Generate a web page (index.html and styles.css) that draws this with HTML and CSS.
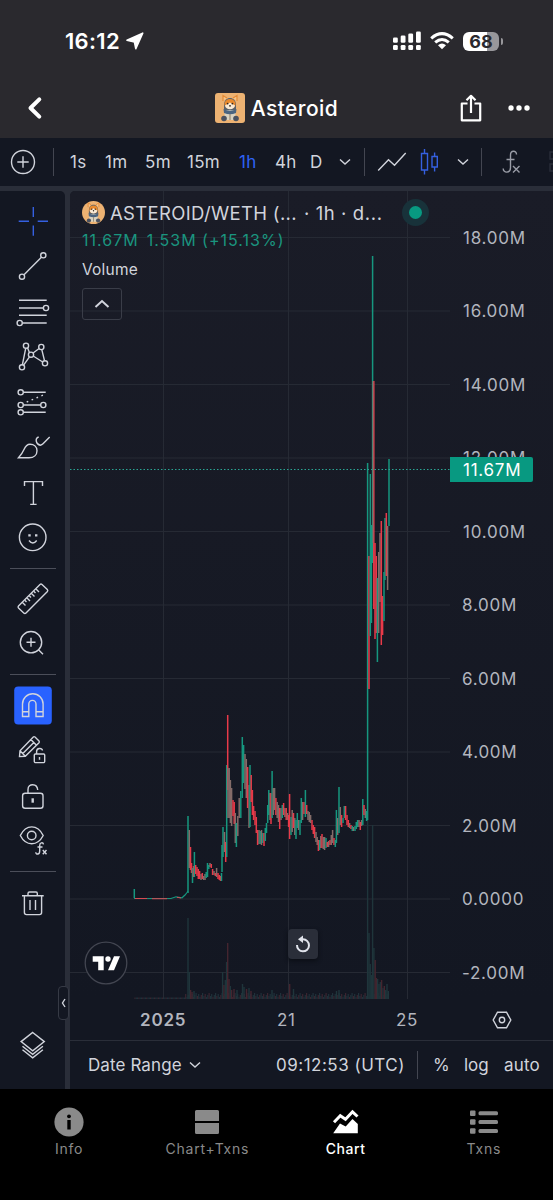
FILE: index.html
```html
<!DOCTYPE html>
<html lang="en">
<head>
  <meta charset="utf-8">
  <title>Asteroid</title>
  <link rel="stylesheet" href="styles.css">
</head>
<body>
  <svg class="defs" width="0" height="0">
    <symbol id="dog" viewBox="0 0 30 30">
      <rect width="30" height="30" fill="#edb272"/>
      <path d="M8 8L8 2.500L12 5M22 8L22 2.500L18 5" fill="#f6c58a" stroke="#e58a35" stroke-width="1.200"/>
      <path d="M9 12C9 2.500 21 2.500 21 12V17H9z" fill="#59616b"/>
      <ellipse cx="15" cy="11" rx="5.500" ry="5" fill="#e98a2d"/>
      <path d="M10 12.500Q12.500 11 15 9.500Q17.500 11 20 12.500Q19 16.300 15 16.300T10 12.500" fill="#f8ead6"/>
      <circle cx="12.600" cy="10.600" r=".9" fill="#33251d"/><circle cx="17.400" cy="10.600" r=".9" fill="#33251d"/><circle cx="15" cy="12.800" r=".9" fill="#33251d"/>
      <path d="M10 17H20L21 27H9z" fill="#d9d2c0"/>
      <path d="M8.500 16Q15 19.500 21.500 16L21 20Q15 22.500 9 20z" fill="#4c6580"/>
      <circle cx="9" cy="25.500" r="2.800" fill="#4b5260"/><circle cx="21" cy="25.500" r="2.800" fill="#4b5260"/>
      <path d="M15 21V27" stroke="#8a7d68"/>
    </symbol>
  </svg>

  <header class="header">
    <div class="status">
      <div class="clock">16:12
        <svg width="18" height="18" viewBox="0 0 18 18"><path d="M16.700 1.200L9.800 16.700L8.400 9.900L1 8.200z" fill="#fff" stroke="#fff" stroke-width="1.600" stroke-linejoin="round"/></svg>
      </div>
      <div class="signals">
        <svg width="28" height="20" viewBox="0 0 28 20" fill="#fff"><rect y="6.500" width="4.800" height="5.300" rx="1.300"/><rect x="7.700" y="4.500" width="4.800" height="7.300" rx="1.300"/><rect x="15.300" y="2.500" width="4.800" height="9.300" rx="1.300"/><rect x="23" y=".5" width="4.800" height="11.300" rx="1.300"/><rect y="14" width="4.800" height="5" rx="1.300"/><rect x="7.700" y="14" width="4.800" height="5" rx="1.300"/><rect x="15.300" y="14" width="4.800" height="5" rx="1.300"/><rect x="23" y="14" width="4.800" height="5" rx="1.300"/></svg>
        <svg width="24" height="18" viewBox="0 0 24 18" fill="none" stroke="#fff" stroke-width="3"><path d="M1.200 6.300Q12-3 22.800 6.300M5.200 10.400Q12 4.500 18.800 10.400"/><path d="M8 13.200Q12 10 16 13.200L12 17.300z" fill="#fff" stroke="none"/></svg>
        <div class="battery"><span>68</span></div>
      </div>
    </div>
    <div class="nav">
      <svg width="16" height="24" viewBox="0 0 16 24"><path d="M12.300 3.300L3.500 12L12.300 20.700" fill="none" stroke="#fff" stroke-width="4" stroke-linecap="round" stroke-linejoin="round"/></svg>
      <div class="name"><svg class="logo" width="30" height="30"><use href="#dog"/></svg>Asteroid</div>
      <div class="actions">
        <svg width="22" height="28" viewBox="0 0 22 28" fill="none" stroke="#fff" stroke-width="2.200"><path d="M7.500 9.500H1.800V26.300H20.200V9.500H14.500M11 19V2.500M6.500 6.300L11 1.800L15.500 6.300" stroke-linejoin="round"/></svg>
        <svg width="22" height="6" viewBox="0 0 22 6" fill="#fff"><circle cx="3" cy="3" r="2.700"/><circle cx="11" cy="3" r="2.700"/><circle cx="19" cy="3" r="2.700"/></svg>
      </div>
    </div>
  </header>

  <div class="toolbar">
    <svg class="add" width="26" height="26" viewBox="0 0 26 26"><circle cx="13" cy="13" r="11.500"/><path d="M7.300 13H18.700M13 7.300V18.700"/></svg>
    <i class="bar"></i>
    <span class="t1">1s</span><span class="t2">1m</span><span class="t3">5m</span><span class="t4">15m</span><span class="t5 on">1h</span><span class="t6">4h</span><span class="t7">D</span>
    <svg class="chev" width="12" height="8" viewBox="0 0 12 8"><path d="M1 1.500L6 6L11 1.500"/></svg>
    <i class="bar b2"></i>
    <svg class="line" width="30" height="20" viewBox="0 0 30 20"><path d="M1.200 18.500L11.500 7.800L17.500 13.200L28.700 1"/></svg>
    <svg class="candle on" width="20" height="26" viewBox="0 0 20 26"><path d="M2.500 4.500H8.500V21H2.500zM5.500 0V4.500M5.500 21V25.500M13 7.500H18.300V18H13zM15.600 3.500V7.500M15.600 18V22.500"/></svg>
    <svg class="chev c2" width="12" height="8" viewBox="0 0 12 8"><path d="M1 1.500L6 6L11 1.500"/></svg>
    <i class="bar b3"></i>
    <svg class="fx" width="20" height="24" viewBox="0 0 20 24"><path d="M14.500 4.500C14.500 0 8.500 .3 8.500 5V17.500C8.500 23.500 1.200 23.500 1.200 18.500M4.500 9.500H12.500M11 16L17.500 22.500M17.500 16L11 22.500"/></svg>
    <svg class="fade" width="7" height="22" viewBox="0 0 7 22"><path d="M8 1H2V8H8M8 13H2V20H8"/></svg>
  </div>

  <div class="main">
    <div class="tools">
      <svg class="on" viewBox="0 0 44 44"><path d="M7.700 22.300H18M26.700 22.300H37M22.300 8V18M22.300 26.500V36.700"/></svg>
      <svg viewBox="0 0 44 44"><path d="M13 30.800L30.400 13.300"/><circle cx="11" cy="32.700" r="2.600"/><circle cx="32.300" cy="11.300" r="2.600"/></svg>
      <svg viewBox="0 0 44 44"><path d="M8 10.300H35.700M8 18H32.300M8 25.300H35.700M11.500 33H35.700"/><circle cx="35" cy="18" r="2.600"/><circle cx="8.700" cy="33" r="2.600"/></svg>
      <svg viewBox="0 0 44 44"><path d="M14.700 13.300L11.400 29.700M16.500 12.800L18.400 17.500M22.100 18L28.100 13.500M30.800 14.600L33.500 25.700M12.600 30.200L18.500 21.800M22.200 21L31.700 27"/><circle cx="15" cy="10.700" r="2.600"/><circle cx="30.300" cy="12" r="2.600"/><circle cx="20" cy="19.700" r="2.600"/><circle cx="11" cy="32.300" r="2.600"/><circle cx="34" cy="28.300" r="2.600"/></svg>
      <svg viewBox="0 0 44 44"><path d="M12.300 12.300H34.700M12.300 25H29.700M12.300 32.300H34.700"/><path d="M15.700 22L32 15.200" stroke-dasharray="1.700 3.600"/><circle cx="9.700" cy="12.300" r="2.600"/><circle cx="9.700" cy="25" r="2.600"/><circle cx="32.300" cy="25" r="2.600"/><circle cx="9.700" cy="32.300" r="2.600"/></svg>
      <svg viewBox="0 0 44 44"><path d="M7.500 32.700H18C23 32.700 26 29.700 26 25.700S23 19.300 19 19.300C16 19.300 14.500 21 13 24.500C11.500 28 9.500 30.500 7.500 32.700zM27.700 12C23.500 13.500 25 19.500 29.300 20.300C30.500 20 31.300 19.500 32 18.800L38.700 12"/></svg>
      <svg viewBox="0 0 44 44"><path d="M13.500 15V10.600H31.500V15M22.400 10.600V33.400M19.200 33.400H25.600"/></svg>
      <svg viewBox="0 0 44 44"><circle cx="21.700" cy="21.300" r="13.300"/><path d="M18 24.500Q21.800 29.500 25.700 24.500"/><path d="M17.300 19.400H19.700M24 19.400H26.400" stroke-width="2.300"/></svg>
      <hr>
      <svg viewBox="0 0 44 44"><path d="M29 7.500L7.500 29Q6.600 30 7.500 31L13 36.300Q14 37 15 36L36.400 14.500Q37.200 13.500 36.300 12.500L31 7.500Q30 6.600 29 7.500zM11.500 25.500L14.500 28.500M16 21L19 24M20.500 16.500L23.500 19.500M25 12L28 15"/><path d="M13.800 23.200L15.500 24.900M18.300 18.700L20 20.400M22.800 14.200L24.500 15.900"/></svg>
      <svg viewBox="0 0 44 44"><circle cx="20" cy="20.200" r="10.700"/><path d="M27.500 27.700L32 32.200M15.500 20.200H24.500M20 15.700V24.700"/></svg>
      <hr>
      <svg class="magnet" viewBox="0 0 44 44"><rect x="3.200" y="2.500" width="37.600" height="38" rx="4"/><path d="M11.500 32.500V20A10.300 10.300 0 0 1 32.100 20V32.500H25V20A3.600 3.600 0 0 0 17.800 20V32.500zM11.500 27.700H17.800M25 27.700H32.100"/></svg>
      <svg viewBox="0 0 44 44"><path d="M8.500 27.600L9 21.700L22.300 8Q23 7.300 24 8L28 12Q28.700 13 28 13.800L14.300 27.300zM9 21.700L14.300 27.300M19.800 10.500L25.500 16.300M11.800 24.500L22.800 13.500"/><rect x="23.300" y="25" width="10.400" height="8.600" rx="1"/><path d="M25.600 25V22.500C25.600 18.500 31 18.700 31.500 21.500M28.500 28V30.700"/></svg>
      <svg viewBox="0 0 44 44"><rect x="11.600" y="19.300" width="20.400" height="15" rx="2.500"/><path d="M17 19.300V15.500C17 9 26.300 9 26.700 16"/><path d="M21.700 24.300V28.700" stroke-width="2.400"/></svg>
      <svg viewBox="0 0 44 44"><path d="M9.300 16.500C15 5 26.500 5 32.200 16.500C26.500 27.500 15 27.500 9.300 16.500z"/><circle cx="20.700" cy="16.500" r="4.300"/><path d="M32.500 25.300C32 23 28.700 23.300 28.700 26.500V32C28.700 36 24.700 35.700 24.800 33.300M26.500 28H31.500M31.800 31L35.500 35.200M35.500 31L31.800 35.200"/></svg>
      <hr>
      <svg viewBox="0 0 44 44"><path d="M11 14.700H32.700M17 14.700V12.500Q17 11 18.500 11H25Q26.300 11 26.300 12.500V14.700M13.400 14.700V31.500Q13.400 33.600 15.500 33.600H28.500Q30.600 33.600 30.600 31.500V14.700M19 19V29M24.500 19V29"/></svg>
      <svg class="layers" viewBox="0 0 44 44"><path d="M21.700 9.500L33.300 18.600L21.700 27.800L10.100 18.600zM11.500 23.200L21.700 31.300L31.900 23.200M11.500 26.700L21.700 34.800L31.900 26.700"/></svg>
      <div class="handle"><svg width="5" height="10" viewBox="0 0 5 10"><path d="M4 1L1.500 5L4 9"/></svg></div>
    </div>

    <div class="panel">
      <div class="chart">
        <svg class="plot" width="483" height="809" viewBox="70 191 483 809">
          <path class="grid" d="M163.500 191V999M288.500 191V999M407.500 191V999M70 237.500H450M70 311H450M70 384.500H450M70 458H450M70 531.500H450M70 605H450M70 678.500H450M70 752H450M70 825.500H450M70 899H450M70 972.500H450"/>
          <g id="volume"></g>
          <g id="candles"></g>
          <path class="price-line" d="M70 469.500H450"/>
          <g class="scale">
            <text x="463" y="243.700">18.00M</text>
            <text x="463" y="317.200">16.00M</text>
            <text x="463" y="390.700">14.00M</text>
            <text x="463" y="464.200">12.00M</text>
            <text x="463" y="537.700">10.00M</text>
            <text x="462" y="611.200">8.00M</text>
            <text x="462" y="684.700">6.00M</text>
            <text x="462" y="758.200">4.00M</text>
            <text x="462" y="831.700">2.00M</text>
            <text x="462" y="905.200">0.0000</text>
            <text x="462" y="978.700">-2.00M</text>
          </g>
          <path d="M450 457H531Q533 457 533 459V480Q533 482 531 482H450z" fill="#089981"/>
          <text class="price" x="463" y="476">11.67M</text>
        </svg>
        <div class="legend">
          <div class="pair"><svg class="coin" width="23" height="23"><use href="#dog"/></svg><span class="p1">ASTEROID/WETH (...</span><span class="p2">· 1h · d...</span><i class="live"></i></div>
          <div class="change"><span>11.67M</span><span>1.53M (+15.13%)</span></div>
          <div class="volume">Volume</div>
          <div class="collapse"><svg width="16" height="10" viewBox="0 0 16 10"><path d="M1.500 8L8 2L14.500 8"/></svg></div>
        </div>
        <svg class="tv" width="44" height="44" viewBox="0 0 44 44"><circle cx="22" cy="22" r="20.800" fill="#131722" stroke="#434651" stroke-width="1.300"/><path d="M8.700 15.300H19.700V29.300H14.200V20.800H8.700zM30 15.300H36L30 29.300H24z" fill="#fff"/><circle cx="24" cy="18" r="2.700" fill="#fff"/></svg>
        <div class="reset"><svg width="16" height="18" viewBox="0 0 16 18"><path d="M2 10A6 6 0 1 0 8 4.300H5.500" fill="none" stroke="#e0e3eb" stroke-width="2"/><path d="M3 4.300L8 .5V8z" fill="#e0e3eb"/></svg></div>
      </div>
      <div class="times">
        <b>2025</b><span class="d21">21</span><span class="d25">25</span>
        <svg width="20" height="18" viewBox="0 0 20 18"><path d="M5.500 1.200H14.500L18.800 9L14.500 16.800H5.500L1.200 9z"/><circle cx="10" cy="9" r="2.700"/></svg>
      </div>
      <div class="bottom">
        <span class="range">Date Range</span>
        <svg width="12" height="8" viewBox="0 0 12 8"><path d="M1 1.500L6 6L11 1.500"/></svg>
        <span class="utc">09:12:53 (UTC)</span>
        <i class="bar"></i>
        <span class="pct">%</span><span class="log">log</span><span class="auto">auto</span>
      </div>
    </div>
  </div>

  <div class="tabs">
    <div class="tab"><svg width="30" height="30" viewBox="0 0 30 30"><circle cx="15" cy="15" r="14.600" fill="#8a8a8a"/><circle cx="15" cy="9.300" r="1.900"/><path d="M13.300 13H16.700V22.500H13.300z"/></svg>Info</div>
    <div class="tab"><svg width="30" height="30" viewBox="0 0 30 30" fill="#8a8a8a"><path d="M4.500 3H25.500Q27 3 27 4.500V14H3V4.500Q3 3 4.500 3zM3 16H27V25.500Q27 27 25.500 27H4.500Q3 27 3 25.500z"/></svg>Chart+Txns</div>
    <div class="tab active"><svg width="30" height="30" viewBox="0 0 30 30"><path d="M3 15.200L9.300 8.800L14.500 12.300L21.500 4.800L26.500 9.500" fill="none" stroke="#fff" stroke-width="3"/><path d="M2.200 26.200L9 16.500L14.700 19.500L21.500 12L26.800 17V26.200z" fill="#fff"/></svg>Chart</div>
    <div class="tab"><svg width="30" height="30" viewBox="0 0 30 30" fill="#8a8a8a"><rect x="1" y="3.500" width="5.500" height="5.500" rx="1"/><rect x="1" y="12.300" width="5.500" height="5.500" rx="1"/><rect x="1" y="21.200" width="5.500" height="5.500" rx="1"/><rect x="9.500" y="4.300" width="19.500" height="4" rx="1.500"/><rect x="9.500" y="13.100" width="19.500" height="4" rx="1.500"/><rect x="9.500" y="22" width="19.500" height="4" rx="1.500"/></svg>Txns</div>
  </div>
  <script src="script.js"></script>
</body>
</html>
```
FILE: styles.css
```css
body {
  margin: 0;
  width: 553px;
  height: 1200px;
  overflow: hidden;
  background: #000;
  color: #d1d4dc;
  font-family: Inter, "Liberation Sans", sans-serif;
  font-size: 17px;
}

svg {
  display: block;
  flex: none;
}

.defs {
  position: absolute;
}

/* header */
.header {
  height: 138px;
  background: #2a292e;
  color: #fff;
}

.status {
  display: flex;
  justify-content: space-between;
  align-items: center;
  height: 82px;
  padding: 0 50px 0 65px;
}

.clock {
  display: flex;
  align-items: center;
  gap: 6px;
  font-size: 22px;
  font-weight: 600;
  letter-spacing: 0.3px;
}

.signals {
  display: flex;
  align-items: center;
  gap: 9px;
}

.battery {
  position: relative;
  width: 36px;
  height: 19px;
  margin-right: 4px;
  border-radius: 6px;
  background: linear-gradient(90deg, #fff 68%, #98979b 68%);
  color: #2a292e;
  font-size: 18px;
  font-weight: 700;
  line-height: 19px;
  text-align: center;
}

.battery::after {
  content: "";
  position: absolute;
  right: -4px;
  top: 6px;
  width: 2px;
  height: 7px;
  border-radius: 0 2px 2px 0;
  background: #98979b;
}

.nav {
  display: flex;
  justify-content: space-between;
  align-items: center;
  height: 52px;
  padding: 0 23px 0 27px;
}

.name {
  display: flex;
  align-items: center;
  gap: 6px;
  margin-left: 50px;
  font-size: 21px;
  font-weight: 500;
  letter-spacing: 0.4px;
}

.logo {
  border-radius: 3px;
}

.actions {
  display: flex;
  align-items: center;
  gap: 26px;
}

/* top toolbar */
.toolbar {
  display: flex;
  align-items: center;
  height: 48px;
  padding-left: 10px;
  background: #131722;
  letter-spacing: 0.3px;
  white-space: nowrap;
}

.toolbar span {
  flex: none;
}

.toolbar svg,
.tools svg,
.times svg,
.bottom svg,
.collapse svg {
  fill: none;
  stroke: #d1d4dc;
  stroke-width: 1.400;
}

.toolbar .on,
.tools .on {
  color: #2e62f5;
  stroke: #3560e0;
}

.bar {
  flex: none;
  width: 1px;
  height: 28px;
  background: #434651;
}

.toolbar .bar { margin-left: 17px; }
.t1 { width: 35px; margin-left: 16px; }
.t2 { width: 40px; }
.t3 { width: 42px; }
.t4 { width: 52px; }
.t5 { width: 36px; }
.t6 { width: 35px; }
.t7 { width: 29px; }
.toolbar .b2 { margin-left: 13px; }
.line { margin-left: 12px; }
.candle { margin-left: 12px; }
.c2 { margin-left: 18px; }
.toolbar .b3 { margin-left: 12px; }
.toolbar .fx { margin-left: 20px; stroke: #999ca6; }
.toolbar .fade { margin-left: 26px; stroke: #2a2e39; }

/* chart area */
.main {
  display: flex;
  gap: 5px;
  height: 898px;
  padding-top: 5px;
  background: #2a2e39;
}

.tools {
  position: relative;
  display: flex;
  flex-direction: column;
  align-items: center;
  width: 65px;
  height: 890.500px;
  padding-top: 7.500px;
  border-radius: 0 5px 0 0;
  background: #131722;
}

.tools > svg {
  width: 44px;
  height: 44px;
  margin: 0.625px 0;
}

.tools hr {
  width: 46px;
  height: 1px;
  margin: 7px 0 8px;
  border: 0;
  background: #4b4e59;
}

.tools .magnet rect {
  fill: #2962ff;
  stroke: none;
}

.tools .layers {
  margin-top: auto;
  margin-bottom: 22px;
}

.handle {
  position: absolute;
  right: -4px;
  top: 795px;
  display: flex;
  align-items: center;
  justify-content: center;
  width: 9px;
  height: 32px;
  border: 1px solid #363a45;
  border-radius: 4px;
  background: #131722;
}

.panel {
  flex: 1;
  background: #131722;
  border-radius: 5px 0 0 0;
}

.chart {
  position: relative;
  height: 808px;
  border-bottom: 1px solid #2a2e39;
}

.plot {
  background: linear-gradient(#1a1c27, #131722);
  border-radius: 5px 0 0 0;
}

.grid {
  fill: none;
  stroke: #262a34;
}

.price-line {
  stroke: #2aa594;
  stroke-dasharray: 1.500 2;
}

.scale,
.price {
  fill: #b2b5be;
  font-size: 17px;
  letter-spacing: 0.75px;
}

.price {
  fill: #fff;
}

.legend {
  position: absolute;
  left: 12px;
  top: 8px;
  white-space: nowrap;
}

.pair {
  display: flex;
  align-items: center;
  height: 27px;
  font-size: 18.500px;
}

.coin {
  margin-right: 5px;
  border-radius: 50%;
}

.p1 {
  letter-spacing: 0.33px;
}

.p2 {
  margin-left: 7px;
  letter-spacing: 0.6px;
}

.live {
  width: 13px;
  height: 13px;
  margin-left: 19px;
  border: 7px solid #18323a;
  border-radius: 50%;
  background: #089981;
}

.change {
  display: flex;
  gap: 8px;
  margin-top: 4px;
  color: #1a957f;
  font-size: 16px;
  line-height: 21px;
  letter-spacing: 1px;
}

.volume {
  margin-top: 8px;
  font-size: 15.500px;
  line-height: 21px;
  letter-spacing: 0.2px;
}

.collapse {
  display: flex;
  align-items: center;
  justify-content: center;
  width: 38px;
  height: 30px;
  margin-top: 8px;
  border: 1px solid #3a3d48;
  border-radius: 3px;
}

.collapse svg {
  stroke-width: 2;
}

.tv {
  position: absolute;
  left: 14px;
  top: 750px;
}

.reset {
  position: absolute;
  left: 218px;
  top: 738px;
  display: flex;
  align-items: center;
  justify-content: center;
  width: 30px;
  height: 30px;
  border-radius: 4px;
  background: #2a2e39;
  box-shadow: 0 2px 4px #0b0e15;
}

.times {
  display: flex;
  align-items: center;
  height: 40px;
  padding-left: 70px;
  border-bottom: 1px solid #2a2e39;
  color: #b2b5be;
}

.times b {
  width: 137px;
  font-weight: 600;
  letter-spacing: 0.8px;
}

.d21,
.d25 {
  letter-spacing: 0.6px;
}

.d21 { width: 119px; }
.d25 { width: 96px; }

.bottom {
  display: flex;
  align-items: center;
  height: 48px;
  padding-left: 18px;
  white-space: nowrap;
}

.range {
  width: 101px;
  letter-spacing: 0.1px;
}

.utc {
  width: 129px;
  margin-left: 75px;
  letter-spacing: 0.5px;
}

.bottom .bar { margin-left: 12px; }
.pct { width: 31px; margin-left: 15px; }
.log { width: 40px; }
.auto { letter-spacing: 0.2px; }

/* tab bar */
.tabs {
  display: flex;
  height: 111px;
}

.tab {
  display: flex;
  flex: 1;
  flex-direction: column;
  align-items: center;
  gap: 3px;
  padding-top: 18px;
  color: #8a8a8a;
  font-size: 14px;
  letter-spacing: 0.8px;
}

.active {
  color: #fff;
  font-weight: 500;
  letter-spacing: 0.5px;
}
```
FILE: script.js
```js
const colors = { g: "#16977f", r: "#e83a49", m: "#846c69" };

// x, high, low, color
const candles = [
  [134.3, 889, 898, "g"], [188, 816, 893, "g"], [189.3, 830, 868, "m"], [190.5, 847, 870, "r"], [191.5, 863, 873, "r"],
  [192.5, 868, 883, "g"], [193.5, 866, 877, "r"], [194.4, 852, 877, "g"], [195.7, 865, 874, "r"], [197, 867, 876, "r"],
  [198.3, 869, 879, "r"], [199.6, 871, 879, "r"], [201, 874, 880, "m"], [202.3, 873, 879, "r"], [203.6, 876, 880, "m"],
  [205, 874, 880, "m"], [206.2, 872, 878, "g"], [207.5, 863, 877, "g"], [208.8, 865, 869, "g"], [210, 863, 867, "m"],
  [211.3, 864, 868, "r"], [212.6, 869, 875, "r"], [214, 871, 875, "m"], [215.3, 873, 876, "r"], [216.6, 868, 877, "m"],
  [218, 873, 879, "r"], [219.3, 875, 880, "r"], [220.5, 876, 881, "r"], [221.5, 873, 881, "g"], [222, 845, 872, "g"],
  [223, 827, 857, "g"], [224.5, 832, 852, "m"], [225.7, 842, 862, "r"], [226.7, 765, 857, "g"], [227.7, 715, 790, "r"],
  [228, 768, 818, "m"], [229.2, 768, 818, "m"], [230.4, 780, 823, "m"], [231.6, 788, 826, "m"], [233, 800, 816, "r"],
  [234.2, 802, 824, "r"], [235.3, 813, 843, "m"], [236.4, 823, 847, "g"], [237.8, 816, 836, "m"], [239.2, 798, 818, "m"],
  [240.8, 791, 818, "g"], [242.3, 737, 798, "g"], [243.6, 745, 783, "g"], [245, 754, 789, "m"], [246.3, 759, 798, "m"],
  [247.6, 767, 808, "r"], [249, 785, 828, "m"], [250, 765, 827, "g"], [251.2, 775, 802, "r"], [252.4, 790, 815, "r"],
  [253.6, 806, 820, "r"], [255, 811, 825, "r"], [256.3, 817, 833, "r"], [257.6, 830, 845, "r"], [259, 830, 844, "m"],
  [260.2, 831, 844, "g"], [261.5, 830, 845, "m"], [262.8, 833, 843, "g"], [264, 833, 846, "r"], [265.3, 828, 841, "g"],
  [266.5, 823, 833, "g"], [267.7, 805, 823, "g"], [268.8, 790, 815, "g"], [270, 793, 820, "m"], [271, 793, 824, "r"],
  [272.1, 771, 818, "g"], [273.3, 788, 815, "m"], [274.6, 788, 810, "m"], [275.9, 798, 815, "r"], [277.2, 802, 818, "m"],
  [278.5, 805, 822, "m"], [279.7, 808, 829, "r"], [281, 808, 820, "m"], [282.3, 805, 818, "g"], [283.6, 803, 815, "r"],
  [284.9, 808, 817, "m"], [286.2, 808, 820, "r"], [287.5, 813, 820, "m"], [288.6, 815, 827, "r"], [289.6, 794, 839, "r"],
  [291, 817, 835, "g"], [292.2, 810, 832, "m"], [293.5, 813, 828, "r"], [294.8, 818, 835, "m"], [296, 820, 839, "g"],
  [297.3, 813, 828, "g"], [298.6, 820, 830, "m"], [300, 820, 835, "g"], [301.3, 798, 823, "g"], [302.6, 802, 820, "m"],
  [304, 802, 814, "r"], [305.4, 790, 817, "g"], [306.7, 805, 814, "r"], [308, 811, 820, "m"], [309.3, 812, 822, "m"],
  [310.6, 815, 823, "m"], [312, 820, 830, "r"], [313.3, 825, 834, "r"], [314.6, 827, 838, "r"], [316, 832, 842, "m"],
  [317.2, 837, 845, "m"], [318.4, 840, 851, "r"], [319.6, 840, 850, "g"], [320.8, 836, 848, "m"], [322, 834, 848, "r"],
  [323.3, 837, 849, "m"], [324.6, 837, 850, "m"], [326, 838, 848, "g"], [327.3, 842, 847, "r"], [328.6, 841, 847, "m"],
  [330, 840, 845, "r"], [331.3, 835, 845, "m"], [332.6, 830, 843, "m"], [334, 838, 845, "r"], [335.3, 840, 847, "g"],
  [336.4, 810, 843, "g"], [337.7, 818, 835, "m"], [339, 787, 833, "g"], [340.3, 807, 825, "m"], [341.6, 815, 827, "r"],
  [343, 818, 823, "g"], [344.3, 806, 818, "g"], [345.6, 806, 820, "r"], [347, 815, 825, "r"], [348.3, 820, 827, "r"],
  [349.6, 823, 828, "m"], [351, 825, 829, "r"], [352.3, 826, 831, "g"], [353.6, 827, 831, "m"], [355, 826, 831, "g"],
  [356.3, 822, 829, "g"], [357.6, 820, 827, "g"], [359, 820, 827, "m"], [360.3, 822, 830, "r"], [361.6, 820, 826, "m"],
  [362.8, 799, 825, "g"], [364, 805, 815, "r"], [365.3, 809, 818, "m"], [366.6, 811, 821, "g"],
  [367.6, 463, 820, "g"], [369, 556, 689, "r"], [370.3, 474, 636, "g"], [371.4, 525, 623, "g"], [372.6, 256, 563, "g"],
  [373.8, 381, 609, "r"], [375, 543, 639, "r"], [376.3, 556, 633, "r"], [377.4, 578, 662, "g"], [378.7, 552, 633, "m"],
  [380, 533, 602, "m"], [381.3, 521, 645, "r"], [382.6, 596, 635, "r"], [384, 572, 621, "g"], [385, 518, 580, "g"],
  [386.3, 513, 576, "r"], [387.6, 526, 590, "m"], [389, 459, 526, "g"]
];

// x, top, color
const peaks = [
  [188, 918, "g"], [189.3, 972, "g"], [190.6, 990, "r"], [192, 992, "r"], [194, 991, "g"], [222.6, 972, "g"],
  [224, 985, "r"], [225.3, 980, "g"], [226.6, 962, "g"], [227.7, 943, "r"], [229, 979, "r"], [230.3, 986, "g"],
  [231.6, 990, "r"], [234, 989, "r"], [237, 990, "g"], [242.5, 984, "g"], [244, 987, "g"], [246.5, 989, "r"],
  [249, 988, "g"], [251, 991, "r"], [272, 990, "g"], [289.7, 984, "r"], [293.5, 989, "g"], [336.5, 991, "g"],
  [339, 990, "g"], [367.6, 820, "g"], [369, 933, "g"], [370.2, 964, "g"], [371.4, 975, "g"], [372.6, 825, "g"],
  [373.9, 948, "g"], [375.2, 960, "r"], [376.4, 978, "r"], [377.6, 979, "g"], [379, 984, "g"], [380.3, 982, "g"],
  [381.6, 980, "r"], [383, 988, "g"], [384.3, 986, "r"], [385.6, 990, "g"], [387, 984, "g"], [388.3, 991, "g"]
];

function bar(x, top, bottom, color, width) {
  return `<rect x="${x - width / 2}" y="${top}" width="${width}" height="${bottom - top}" fill="${color}"/>`;
}

let vol = "";
for (let i = 0; i < 195; i++) {
  const x = 135 + i * 1.3;
  const h = x < 185 ? 1.5 : 2 + (i * 7 % 5);
  vol += bar(x, 999 - h, 999, i % 3 ? "#20313a" : "#3b2530", 1.2);
}
peaks.forEach(p => vol += bar(p[0], p[1], 999, p[2] === "g" ? "#1f353b" : "#44252f", 1.4));
document.getElementById("volume").innerHTML = vol;

let out = '<path d="M134 898.500H171L176 896.800L182 897.800L185 895L187 892.500L188 891" fill="none" stroke="#16977f" stroke-width="1.200"/>';
out += '<path d="M135 898.500H147M152 898.700H167M177 897.300L181 898" fill="none" stroke="#d54b53"/>';
candles.forEach(c => out += bar(c[0], c[1], c[2], colors[c[3]], 1.5));
// overlapping wicks of the spike
out += bar(373, 381, 543, colors.m, 1);
document.getElementById("candles").innerHTML = out;
```
